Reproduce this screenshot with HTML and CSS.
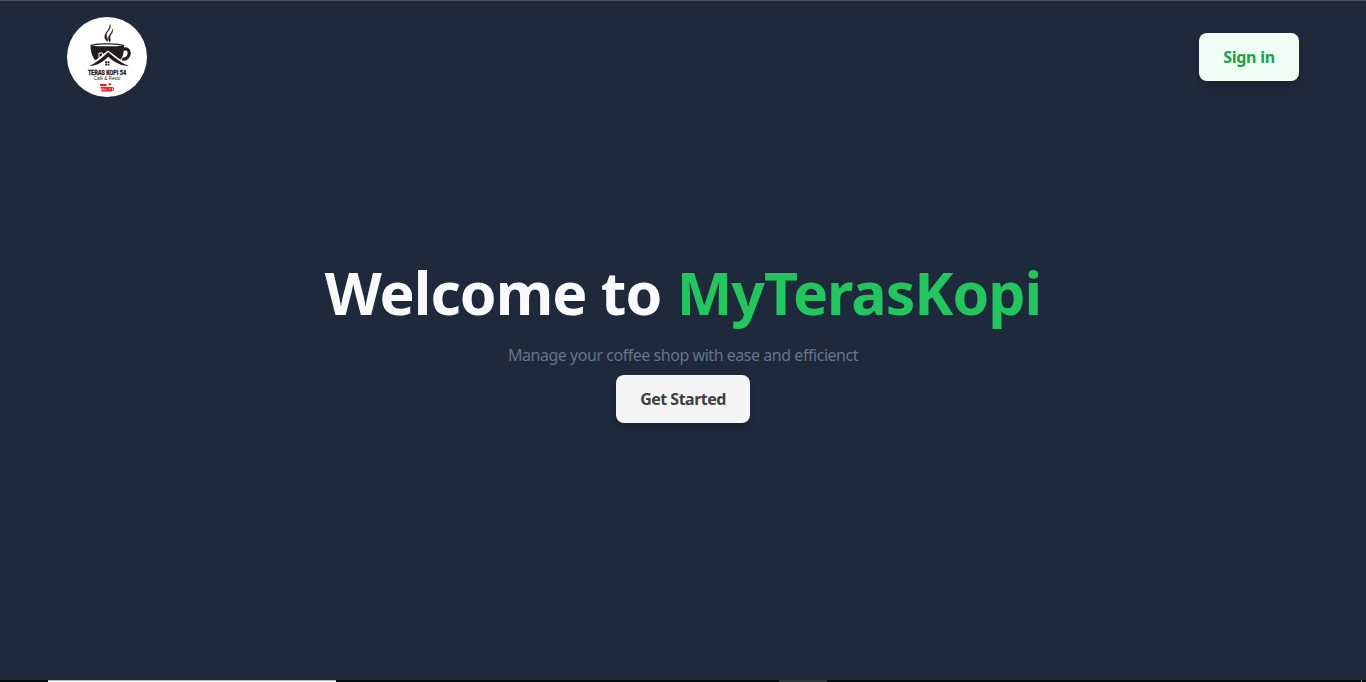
FILE: index.html
```html
<!DOCTYPE html>
<html lang="en">
<head>
<meta charset="utf-8">
<title>MyTerasKopi</title>
<link rel="stylesheet" href="styles.css">
</head>
<body>
<header class="header">
  <svg class="logo" viewBox="0 0 80 80" role="img" aria-label="Teras Kopi 54">
    <circle cx="40" cy="40" r="40" fill="#fff"/>
    <path d="M43 7.500c2 5-4 7-3.600 11 .2 2 2 3.500 1.200 6-3-2-3.600-5-2-8 1.600-3 4.400-5 4.400-9z" fill="#231c1a" stroke="#231c1a" stroke-width=".4"/>
    <path d="M45.500 12c1.200 4-2.700 5.500-2.500 8.500.1 1.500 1 2.500 0 4.500-2-2-2-4.500-.8-6.500s3-3.500 3.300-6.500z" fill="#231c1a" stroke="#231c1a" stroke-width=".4"/>
    <path d="M56 32.500c3.500-1.500 6.200 0 6.200 3.500 0 4-3 6.500-7 6.200" fill="none" stroke="#231c1a" stroke-width="3.200"/>
    <path d="M23.500 28.500c0-3 33-3 33.500 0 0 7-1 14-7 17.500H31c-5-4-7.500-10-7.500-17.500z" fill="#231c1a"/>
    <path d="M25.500 28.700c5-1.500 24-1.500 29.500 0-6 .8-23 .8-29.500 0z" fill="#fff"/>
    <path d="M21 49L41 33.500 62 49l-8 1H29z" fill="#fff"/>
    <path d="M32 40.500v-4.500h3.500v3" fill="none" stroke="#fff" stroke-width="1"/>
    <path d="M22 49c7-3 12.500-7.500 19.300-14 7 6.500 13 11 20.700 14-8.500 0-15-4-20.700-9.200-5.600 5.200-11 9.200-19.300 9.200z" fill="#231c1a"/>
    <path d="M38.200 44.200h1.800V46h-1.800zm2.400 0h1.800V46h-1.800zm-2.400 2.400h1.800v1.800h-1.800zm2.400 0h1.800v1.800h-1.800z" fill="#231c1a"/>
    <text class="logo-name" x="21" y="58" textLength="38" lengthAdjust="spacingAndGlyphs">TERAS KOPI 54</text>
    <text class="logo-sub" x="26.700" y="62.500" textLength="26.500" lengthAdjust="spacingAndGlyphs">Café &amp; Resto</text>
    <g fill="#e2252b">
      <path d="M33 67h6.500v2.300H33zM33.500 70h7.200V74.600h-6zM40.800 70h4.600l-.5 4.600h-4.100zM41.300 67.200l1.600-1.400 1.600 1.400-1.600 1.600z"/>
      <path d="M34.500 71.500l1 1.500 1-1.500 1 1.500 1.500-1.500M42 72h2" fill="none" stroke="#fff" stroke-width=".6"/>
      <path d="M45 70.800h1.600v2.500H45" fill="none" stroke="#e2252b" stroke-width=".9"/>
    </g>
  </svg>
  <button class="button button-signin"><span class="signin-label">Sign in</span></button>
</header>
<main class="hero">
  <h1 class="title"><span class="welcome">Welcome to</span> <span class="brand">MyTerasKopi</span></h1>
  <p class="tagline">Manage your coffee shop with ease and efficienct</p>
  <button class="button button-start"><span class="start-label">Get Started</span></button>
</main>
<footer class="taskbar"><span class="search"></span><span class="active-app"></span><span class="desktop-edge"></span></footer>
</body>
</html>
```
FILE: styles.css
```css
* { box-sizing: border-box; }
body {
  margin: 0;
  height: 682px;
  overflow: hidden;
  display: flex;
  flex-direction: column;
  background: #1e293b;
  border-top: 1px solid #4a5057;
  font-family: "Noto Sans", "Open Sans", sans-serif;
}
.header {
  display: flex;
  justify-content: space-between;
  align-items: center;
  padding: 16px 67px;
}
.logo { width: 80px; height: 80px; display: block; }
.logo-name { font: 700 7.6px "Roboto", sans-serif; fill: #231c1a; stroke: #231c1a; stroke-width: .35px; }
.logo-sub { font: 4.8px "Liberation Sans", sans-serif; fill: #222; }
.button {
  height: 48px;
  padding: 0;
  border: 0;
  border-radius: 8px;
  font: 700 16px/24px "Noto Sans", sans-serif;
  box-shadow: 0 4px 6px -1px rgba(0, 0, 0, .1), 0 8px 12px -3px rgba(0, 0, 0, .07);
}
.button-signin { width: 100px; background: #f0fdf4; color: #16a34a; }
.button-start { width: 134px; background: #f5f5f5; color: #404040; }
.signin-label { letter-spacing: -.25px; }
.start-label { letter-spacing: -.52px; }
.hero {
  flex: 1;
  display: flex;
  flex-direction: column;
  align-items: center;
  padding-top: 149px;
}
.title {
  margin: 0;
  font-size: 59px;
  line-height: 60px;
  font-weight: 700;
  white-space: nowrap;
  color: #f8fafc;
}
.welcome { letter-spacing: -1px; }
.brand { color: #22c55e; letter-spacing: -1px; }
.tagline {
  margin: 21px 0 8px;
  font-size: 16px;
  line-height: 24px;
  font-weight: 400;
  letter-spacing: -.46px;
  color: #64748b;
}
.taskbar { height: 2px; display: flex; background: #090a0c; }
.search { width: 288px; margin-left: 48px; background: #f0f2f3; border-top: 1px solid #b8c0c4; }
.active-app { width: 48px; margin-left: 443px; background: #333637; }
.desktop-edge { width: 1px; margin-left: 534px; background: #85898c; }
```
